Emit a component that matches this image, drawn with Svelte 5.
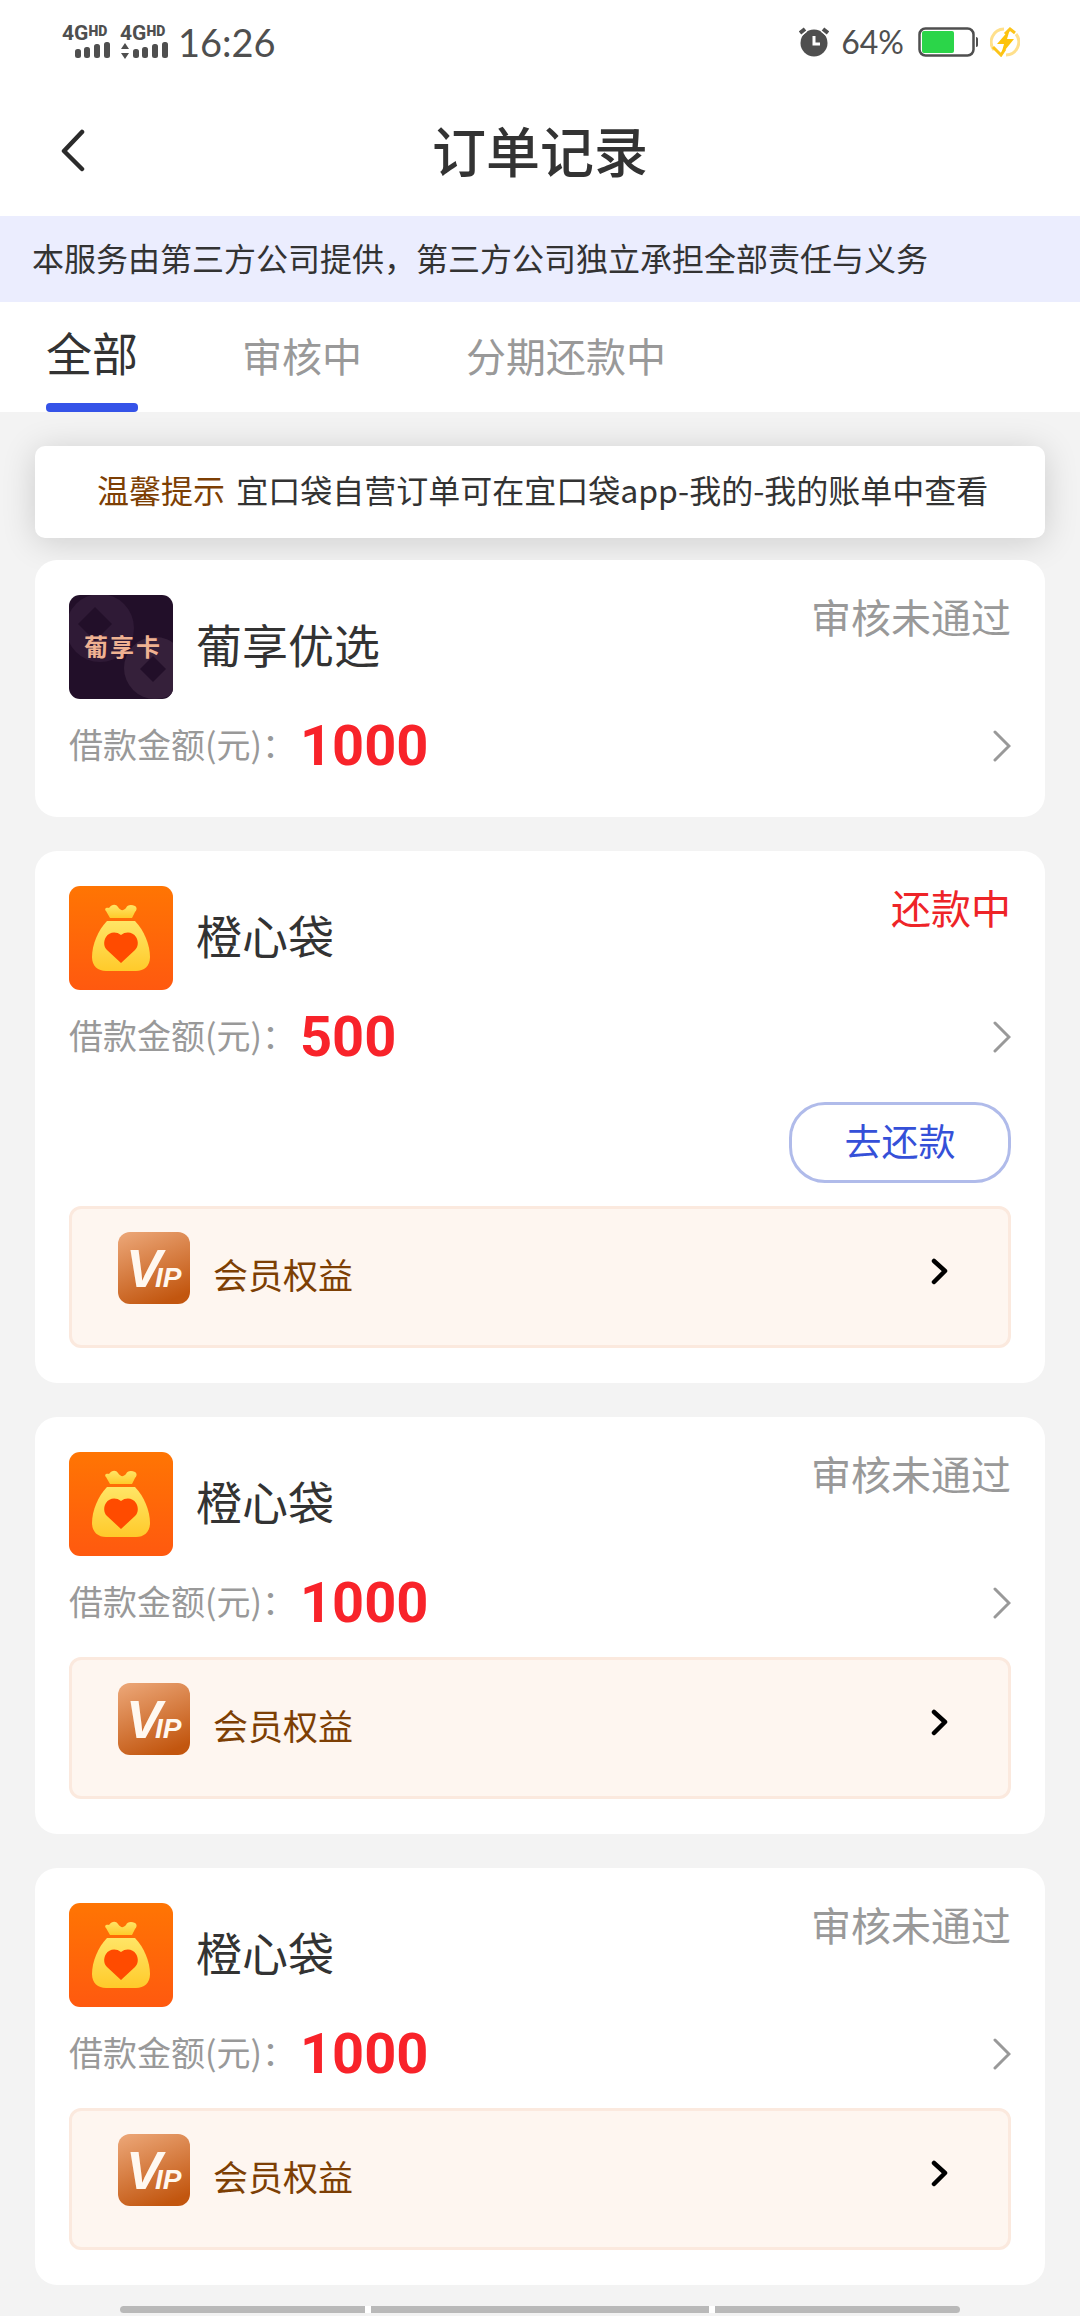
<script>
	const tabs = ['全部', '审核中', '分期还款中'];
	let activeTab = $state('全部');

	const orders = [
		{ id: 1, name: '葡享优选', logo: 'card', amount: 1000, status: '审核未通过' },
		{ id: 2, name: '橙心袋', logo: 'bag', amount: 500, status: '还款中', repay: true, vip: true },
		{ id: 3, name: '橙心袋', logo: 'bag', amount: 1000, status: '审核未通过', vip: true },
		{ id: 4, name: '橙心袋', logo: 'bag', amount: 1000, status: '审核未通过', vip: true }
	];

	let visibleOrders = $derived(
		activeTab === '审核中' ? [] : activeTab === '分期还款中' ? orders.filter((o) => o.repay) : orders
	);
</script>

{#snippet signal(data)}
	<div class="sim">
		<div class="sim-label"><b>4G</b><small>HD</small></div>
		<svg width="48" height="18" viewBox="0 0 48 18" fill="currentColor" aria-hidden="true">
			{#if data}
				<path d="M5 2l4 6H1zM5 18l4-6H1z" />
			{/if}
			<rect x="13" y="8" width="6" height="9" rx="2.5" />
			<rect x="22" y="6" width="6" height="11" rx="2.5" />
			<rect x="32" y="3" width="6" height="14" rx="2.5" />
			<rect x="42" y="1" width="6" height="16" rx="2.5" />
		</svg>
	</div>
{/snippet}

{#snippet cardLogo()}
	<svg class="logo" viewBox="0 0 104 104" aria-hidden="true">
		<rect width="104" height="104" fill="#220f29" />
		<circle cx="31" cy="33" r="34" fill="#2f1a36" />
		<path d="M26 12l17 17-17 17L9 29z" fill="#220f29" />
		<circle cx="86" cy="73" r="31" fill="#35203a" />
		<path d="M84 61l13 13-13 13-13-13z" fill="#220f29" />
		<text x="15 41 67" y="61" class="logo-text">葡享卡</text>
	</svg>
{/snippet}

{#snippet bagLogo(id)}
	<svg class="logo" viewBox="0 0 104 104" aria-hidden="true">
		<defs>
			<linearGradient id="bg{id}" x1="0" y1="0" x2="0" y2="1">
				<stop offset="0" stop-color="#ff7503" />
				<stop offset="1" stop-color="#ff590f" />
			</linearGradient>
			<linearGradient id="bag{id}" x1="0" y1="0" x2="0" y2="1">
				<stop offset="0" stop-color="#ffe566" />
				<stop offset="1" stop-color="#ffca2a" />
			</linearGradient>
		</defs>
		<rect width="104" height="104" fill="url(#bg{id})" />
		<path
			d="M41 32l-4-7c-2-2 0-4 3-3 3-4 7-4 9-1 3 4 5 4 8 1 1-3 5-4 9-2 3 2 1 5 0 6l-3 6z"
			fill="url(#bag{id})"
		/>
		<path
			d="M38 35h28c9 9 15 24 15 36 0 9-6 14-14 14H37c-8 0-14-5-14-14 0-12 6-27 15-36z"
			fill="url(#bag{id})"
		/>
		<path
			d="M52 49c5-4 12-3 15 2 3 5 2 10-1 13L52 77 38 64c-3-3-4-8-1-13 3-5 10-6 15-2z"
			fill="#ff4b00"
		/>
	</svg>
{/snippet}

<div class="page">
	<div class="status-bar">
		{@render signal(false)}
		{@render signal(true)}
		<time>16:26</time>
		<div class="status-right">
			<svg width="30" height="30" viewBox="0 0 30 30" aria-hidden="true">
				<circle cx="15" cy="16" r="13.5" fill="#4f4f4f" />
				<path d="M1 6l5-4M29 6l-5-4" stroke="#fff" stroke-width="7" />
				<path d="M1 6l5-4M29 6l-5-4" stroke="#4f4f4f" stroke-width="4" />
				<path d="M15 9v8h6" fill="none" stroke="#fff" stroke-width="3" />
			</svg>
			<span class="percent">64%</span>
			<svg width="60" height="30" viewBox="0 0 60 30" aria-hidden="true">
				<rect x="1.5" y="1.5" width="54" height="27" rx="6" fill="none" stroke="#4f4f4f" stroke-width="2.5" />
				<rect x="4" y="4" width="32" height="22" rx="2" fill="#2bd549" />
				<path d="M58 10c1.500 0 2 1 2 2v6c0 1-.5 2-2 2z" fill="#4f4f4f" />
			</svg>
			<svg width="30" height="30" viewBox="0 0 30 30" aria-hidden="true">
				<path d="M4 23A13 13 0 0 1 14 2" fill="none" stroke="#ffe08c" stroke-width="3" />
				<path d="M26 7A13 13 0 0 1 16 28" fill="none" stroke="#ffe08c" stroke-width="3" />
				<path d="M3 20l8 8 4-6M15 7l5-5 5 4" fill="none" stroke="#fcc419" stroke-width="3" />
				<path d="M20 2L7 17h7l-3 11 13-16h-7z" fill="#fdc30a" />
			</svg>
		</div>
	</div>

	<header>
		<button class="back" aria-label="返回">
			<svg width="24" height="44" viewBox="0 0 24 44" fill="none" aria-hidden="true">
				<path d="M21 4L3 23l18 18" stroke="#2b2b2b" stroke-width="4.5" stroke-linecap="round" stroke-linejoin="round" />
			</svg>
		</button>
		<h1>订单记录</h1>
	</header>

	<p class="notice">本服务由第三方公司提供，第三方公司独立承担全部责任与义务</p>

	<nav class="tabs">
		{#each tabs as tab}
			<button class="tab" class:active={tab === activeTab} onclick={() => (activeTab = tab)}>{tab}</button>
		{/each}
	</nav>

	<main>
		<p class="tip"><span>温馨提示</span> 宜口袋自营订单可在宜口袋app-我的-我的账单中查看</p>

		<div class="orders">
			{#each visibleOrders as order (order.id)}
				<article class="order">
					<div class="order-head">
						{#if order.logo === 'card'}
							{@render cardLogo()}
						{:else}
							{@render bagLogo(order.id)}
						{/if}
						<h2>{order.name}</h2>
						<span class="status" class:repaying={order.repay}>{order.status}</span>
					</div>

					<div class="amount-row">
						<span class="label">借款金额(元)：</span>
						<strong>{order.amount}</strong>
						<svg width="20" height="32" viewBox="0 0 20 32" fill="none" aria-hidden="true">
							<path d="M4 2l14 14L4 30" stroke="#999" stroke-width="3" stroke-linecap="round" />
						</svg>
					</div>

					{#if order.repay}
						<button class="repay">去还款</button>
					{/if}

					{#if order.vip}
						<button class="vip">
							<svg class="vip-icon" viewBox="0 0 72 72" aria-hidden="true">
								<defs>
									<linearGradient id="vip{order.id}" x1="0.2" y1="0" x2="0.6" y2="1">
										<stop offset="0" stop-color="#eaa373" />
										<stop offset="1" stop-color="#c2560f" />
									</linearGradient>
								</defs>
								<rect width="72" height="72" rx="12" fill="url(#vip{order.id})" />
								<text x="8" y="55" class="vip-mark">V<tspan x="37" class="vip-small">IP</tspan></text>
							</svg>
							<span>会员权益</span>
							<svg class="vip-arrow" width="18" height="30" viewBox="0 0 18 30" fill="none" aria-hidden="true">
								<path d="M4 5l11 10L4 26" stroke="#000" stroke-width="4.5" stroke-linecap="round" stroke-linejoin="round" />
							</svg>
						</button>
					{/if}
				</article>
			{/each}
		</div>
	</main>

	<div class="system-nav">
		<i></i>
		<i class="home"></i>
		<i></i>
	</div>
</div>

<style>
	:global(body) {
		background: #f3f3f3;
	}

	.page {
		font-family: 'Noto Sans CJK SC', 'Noto Sans', sans-serif;
		color: #333;
	}

	h1,
	h2,
	p {
		margin: 0;
		font-weight: 400;
	}

	button {
		padding: 0;
		border: none;
		background: none;
		font-family: inherit;
		color: inherit;
		cursor: pointer;
	}

	svg {
		display: block;
		flex-shrink: 0;
	}

	.status-bar {
		display: flex;
		align-items: center;
		gap: 10px;
		height: 84px;
		padding: 0 60px 0 62px;
		background: #fff;
		color: #4f4f4f;
	}

	.sim {
		width: 48px;
	}

	.sim-label {
		display: flex;
		align-items: flex-start;
		height: 16px;
		font-family: Roboto, sans-serif;
	}

	.sim-label b {
		font-size: 21px;
		line-height: 16px;
	}

	.sim-label small {
		font-size: 14px;
		font-weight: 900;
		line-height: 12px;
	}

	time {
		font-family: Lato, sans-serif;
		font-size: 38px;
		line-height: 40px;
	}

	.status-right {
		display: flex;
		align-items: center;
		gap: 12px;
		margin-left: auto;
	}

	.percent {
		margin-right: 2px;
		font-family: Lato, sans-serif;
		font-size: 32px;
		line-height: 32px;
	}

	header {
		display: grid;
		grid-template-columns: 1fr auto 1fr;
		align-items: center;
		height: 132px;
		padding: 0 61px;
		background: #fff;
	}

	.back {
		justify-self: start;
	}

	h1 {
		font-size: 54px;
		font-weight: 500;
		line-height: 60px;
	}

	.notice {
		padding: 18px 32px 22px;
		background: #ebedfe;
		font-size: 32px;
		line-height: 46px;
	}

	.tabs {
		display: flex;
		gap: 104px;
		height: 110px;
		padding: 0 46px;
		background: #fff;
	}

	.tab {
		position: relative;
		padding-bottom: 4px;
		font-size: 40px;
		color: #999;
	}

	.tab.active {
		padding-bottom: 12px;
		font-size: 46px;
		color: #333;
	}

	.tab.active::after {
		content: '';
		position: absolute;
		left: 0;
		right: 0;
		bottom: 0;
		height: 9px;
		border-radius: 4px;
		background: #3553e8;
	}

	main {
		padding: 34px 35px 21px;
	}

	.tip {
		padding: 20px 48px 26px 62px;
		border-radius: 10px;
		background: #fff;
		box-shadow: 0 4px 34px rgba(0, 0, 0, 0.16);
		font-size: 32px;
		line-height: 46px;
	}

	.tip span {
		margin-right: 4px;
		color: #7d3f04;
	}

	.orders {
		position: relative;
		display: flex;
		flex-direction: column;
		gap: 34px;
		margin-top: 22px;
	}

	.order {
		display: flex;
		flex-direction: column;
		padding: 35px 34px;
		border-radius: 22px;
		background: #fff;
	}

	.order-head {
		display: flex;
		align-items: center;
	}

	.logo {
		width: 104px;
		height: 104px;
		border-radius: 11px;
	}

	.logo-text {
		font-size: 24px;
		font-weight: 700;
		fill: #efb292;
	}

	h2 {
		margin-left: 23px;
		padding-bottom: 8px;
		font-size: 46px;
		line-height: 60px;
	}

	.status {
		align-self: flex-start;
		margin-left: auto;
		font-size: 40px;
		line-height: 42px;
		color: #999;
	}

	.status.repaying {
		color: #ee2428;
	}

	.amount-row {
		display: flex;
		align-items: center;
		height: 69px;
		margin: 12px 0 2px;
	}

	.label {
		padding-bottom: 4px;
		font-size: 34px;
		color: #999;
	}

	.amount-row strong {
		margin-left: 4px;
		font-family: Roboto, sans-serif;
		font-size: 56px;
		font-weight: 700;
		line-height: 66px;
		color: #f8232a;
	}

	.amount-row svg {
		margin-left: auto;
	}

	.repay {
		align-self: flex-end;
		width: 222px;
		height: 81px;
		margin: 29px 0 5px;
		padding-bottom: 6px;
		border: 3px solid #b0bbea;
		border-radius: 36px;
		font-size: 37px;
		color: #3550d8;
	}

	.vip {
		display: flex;
		align-items: flex-start;
		height: 142px;
		margin-top: 18px;
		padding: 23px 60px 0 46px;
		border: 3px solid #fbe9de;
		border-radius: 12px;
		background: #fef6f0;
	}

	.vip-icon {
		width: 72px;
		height: 72px;
	}

	.vip-mark {
		font-family: 'Liberation Sans', sans-serif;
		font-size: 54px;
		font-weight: 700;
		font-style: italic;
		fill: #fff8f0;
	}

	.vip-small {
		font-size: 28px;
	}

	.vip span {
		margin-left: 23px;
		font-size: 35px;
		line-height: 84px;
		color: #7d3f04;
	}

	.vip-arrow {
		margin: 24px 0 0 auto;
	}

	.system-nav {
		display: flex;
		gap: 6px;
		height: 7px;
		margin: 0 120px 3px;
		border-radius: 4px;
		background: #fff;
		overflow: hidden;
	}

	.system-nav i {
		flex: 245;
		background: #b9b9b9;
	}

	.system-nav .home {
		flex: 338;
	}
</style>
